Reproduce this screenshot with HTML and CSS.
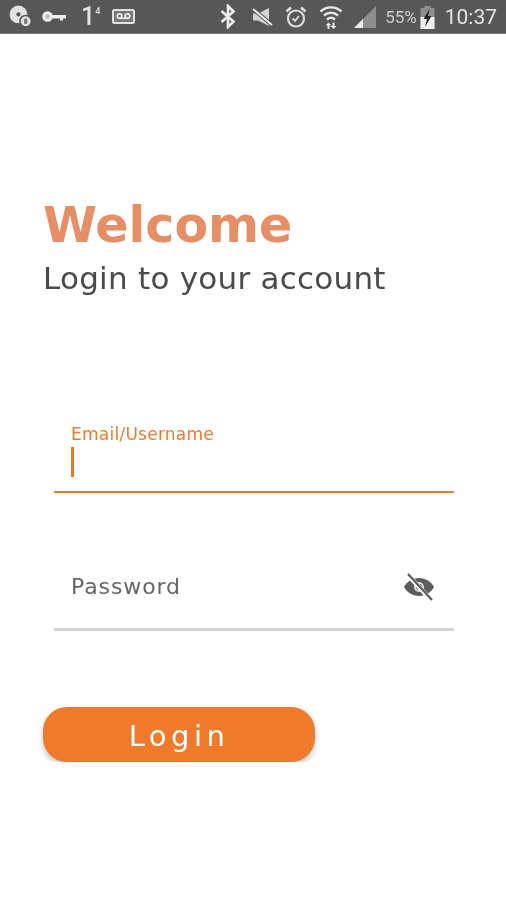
FILE: index.html
```html
<!DOCTYPE html>
<html lang="en">
<head>
  <meta charset="UTF-8">
  <meta name="viewport" content="width=device-width, initial-scale=1.0">
  <title>Login</title>
  <link rel="stylesheet" href="styles.css">
</head>
<body>
  <div class="status-bar">
    <div class="status-left">
      <svg class="icon-disc" width="25" height="25" viewBox="0 0 24 24">
        <circle cx="10" cy="10" r="8.5" fill="#e2e2e2"/>
        <circle cx="10" cy="10" r="2" fill="#555"/>
        <circle cx="17" cy="16.5" r="5.5" fill="#e2e2e2" stroke="#555" stroke-width="1.5"/>
        <rect x="15.5" y="14" width="3" height="5" fill="#777"/>
      </svg>
      <svg class="icon-key" width="25" height="13" viewBox="0 0 25 13">
        <circle cx="5.5" cy="6.5" r="3.8" fill="#bbb" stroke="#eee" stroke-width="3"/>
        <path d="M9 5h15v3.5h-3v2h-3v-2H9z" fill="#eee"/>
      </svg>
      <span class="missed">1<sup>4</sup></span>
      <svg class="icon-voicemail" width="23" height="15" viewBox="0 0 23 15">
        <rect x="1" y="1" width="21" height="13" rx="1.5" fill="#777" stroke="#e2e2e2" stroke-width="2"/>
        <circle cx="7.5" cy="7" r="2.3" fill="none" stroke="#eee" stroke-width="1.6"/>
        <circle cx="15.5" cy="7" r="2.3" fill="none" stroke="#eee" stroke-width="1.6"/>
        <path d="M7.5 9.3h8" stroke="#eee" stroke-width="1.6"/>
      </svg>
    </div>
    <div class="status-right">
      <svg class="icon-bt" width="16" height="25" viewBox="0 0 16 25">
        <path d="M1.5 7l12 10.5L8 23V2l5.5 5.5-12 10.5" fill="none" stroke="#eee" stroke-width="2.6"/>
      </svg>
      <svg class="icon-mute" width="21" height="20" viewBox="0 0 21 20">
        <path d="M1 6.5h5L17 1v18L6 13.5H1z" fill="#d4d4d4"/>
        <path d="M1 2l19 16" stroke="#555" stroke-width="4"/>
        <path d="M1 2l19 16" stroke="#eee" stroke-width="2"/>
      </svg>
      <svg class="icon-alarm" width="22" height="24" viewBox="0 0 22 24">
        <circle cx="11" cy="13.5" r="8" fill="none" stroke="#ddd" stroke-width="2.2"/>
        <path d="M7.5 13.5l2.500 2.500 4-5" fill="none" stroke="#ddd" stroke-width="1.8"/>
        <path d="M1.5 6.5L6 2.5M20.5 6.5L16 2.5" stroke="#ddd" stroke-width="2.6"/>
      </svg>
      <svg class="icon-wifi" width="24" height="26" viewBox="0 0 24 26">
        <path d="M1.5 7.5c6-5.5 15-5.5 21 0M5 11.5c4.200-3.600 9.800-3.600 14 0M8 15.5c2.400-2 5.600-2 8 0" fill="none" stroke="#e8e8e8" stroke-width="2.4"/>
        <path d="M9.5 18.5l-3 3h2V25h2v-3.500h2zM14.5 25l3-3h-2v-3.500h-2V22h-2z" fill="#e8e8e8"/>
      </svg>
      <svg class="icon-signal" width="24" height="24" viewBox="0 0 24 24">
        <path d="M23 1v22H1z" fill="#8e8e8e"/>
        <path d="M1 23l9-9v9z" fill="#eee"/>
      </svg>
      <span class="battery-pct">55%</span>
      <svg class="icon-battery" width="15" height="24" viewBox="0 0 15 24">
        <path d="M4.5 1h6v2h4v21H.5V3h4z" fill="#8f8f8f"/>
        <path d="M.5 12h14v12H.5z" fill="#eee"/>
        <path d="M9.5 4L3.5 14h3.500l-2 8 6.500-11H8z" fill="#222"/>
      </svg>
      <span class="clock">10:37</span>
    </div>
  </div>

  <div class="container">
    <div class="heading">
      <h1>Welcome</h1>
      <h2>Login to your account</h2>
    </div>

    <div class="field field-active">
      <label>Email/Username</label>
      <span class="caret"></span>
    </div>

    <div class="field field-password">
      <span class="placeholder">Password</span>
      <svg class="icon-eye" width="32" height="28" viewBox="0 0 32 28">
        <path d="M1 14c3-5.500 8.500-9 15-9s12 3.500 15 9c-3 5.500-8.500 9-15 9S4 19.500 1 14z" fill="#5c5c5c"/>
        <circle cx="16" cy="14" r="5" fill="#ddd"/>
        <circle cx="16" cy="14" r="3" fill="#5c5c5c"/>
        <path d="M4 1l24 26" stroke="#fff" stroke-width="4.5"/>
        <path d="M5 1l24 26" stroke="#5c5c5c" stroke-width="2.2"/>
      </svg>
    </div>

    <button class="login-btn">Login</button>
  </div>
</body>
</html>
```

FILE: styles.css
```css
body {
  margin: 0;
  padding: 0;
  background-color: #fff;
  font-family: 'DejaVu Sans', sans-serif;
}
.status-bar {
  height: 33px;
  background-color: #575757;
  border-bottom: 1px solid #777;
  display: flex;
  align-items: center;
  justify-content: space-between;
  padding: 0 9px 0 8px;
  color: #ddd;
  font-family: 'Roboto', sans-serif;
  filter: blur(0.5px);
}
.status-left, .status-right {
  display: flex;
  align-items: center;
}
.icon-key {
  margin-left: 9px;
}
.missed {
  margin-left: 14px;
  width: 31px;
  font-size: 25px;
  font-weight: 500;
  line-height: 1;
  color: #e2e2e2;
}
.missed sup {
  font-size: 9px;
  vertical-align: 11px;
  line-height: 0;
}
.icon-mute {
  margin-left: 16px;
}
.icon-alarm {
  margin-left: 12px;
}
.icon-wifi {
  margin-left: 12px;
}
.icon-signal {
  margin-left: 10px;
}
.battery-pct {
  margin-left: 8px;
  font-size: 17px;
  color: #ccc;
}
.icon-battery {
  margin-left: 3px;
}
.clock {
  margin-left: 10px;
  font-size: 21px;
  color: #e4e4e4;
}
.container {
  padding: 0 52px 0 43px;
  filter: blur(0.4px);
}
.heading {
  padding-top: 161px;
}
h1 {
  margin: 0;
  font-size: 49px;
  line-height: 62px;
  font-weight: 700;
  color: #e68f66;
}
h2 {
  margin: 0;
  font-size: 31px;
  letter-spacing: 0.25px;
  line-height: 42px;
  font-weight: 400;
  color: #4a4a4a;
}
.field {
  margin-left: 11px;
  padding-left: 17px;
  box-sizing: border-box;
}
.field-active {
  margin-top: 114px;
  height: 80px;
  padding-top: 10px;
  border-bottom: 2px solid #ee7b2d;
}
.field-active label {
  display: block;
  font-size: 17px;
  letter-spacing: 0.25px;
  line-height: 22px;
  color: #ea7b33;
}
.caret {
  display: block;
  width: 3px;
  height: 30px;
  margin-top: 2px;
  background-color: #e8772e;
}
.field-password {
  margin-top: 43px;
  height: 95px;
  padding-top: 9px;
  border-bottom: 3px solid #d2d2d2;
  display: flex;
  align-items: center;
  justify-content: space-between;
  padding-right: 19px;
}
.placeholder {
  font-size: 22px;
  letter-spacing: 0.9px;
  color: #666;
}
.login-btn {
  display: block;
  margin-top: 76px;
  width: 272px;
  height: 55px;
  padding-top: 3px;
  background-color: #ef7a2c;
  color: #fff;
  border: none;
  border-radius: 24px;
  box-shadow: 0 3px 6px rgba(0, 0, 0, 0.25);
  font-family: inherit;
  font-size: 29px;
  letter-spacing: 4.5px;
  cursor: pointer;
}
```
